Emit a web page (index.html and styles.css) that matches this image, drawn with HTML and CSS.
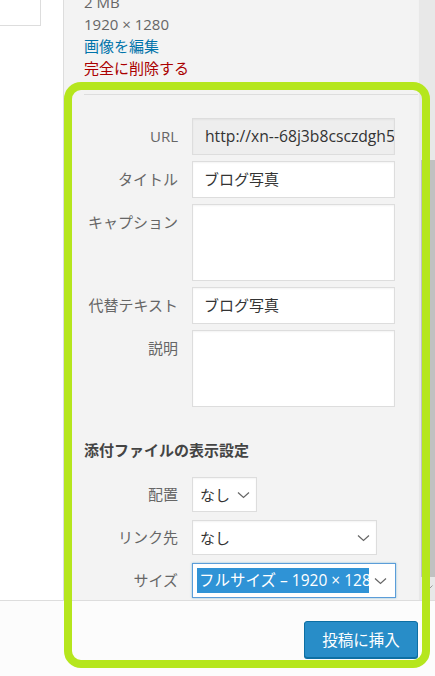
FILE: index.html
```html
<!DOCTYPE html>
<html lang="ja">

<head>
	<meta charset="UTF-8">
	<meta name="viewport" content="width=device-width, initial-scale=1.0">
	<title>添付ファイルの詳細</title>
	<link rel="stylesheet" href="styles.css">
</head>

<body>
	<div class="modal">
		<div class="main">
			<div class="library">
				<div class="thumb"></div>
			</div>

			<div class="sidebar">
				<div class="details">
					<div class="meta">2 MB</div>
					<div class="meta">1920 × 1280</div>
					<a class="meta link" href="#">画像を編集</a>
					<a class="meta delete" href="#">完全に削除する</a>
				</div>

				<div class="divider"></div>

				<div class="settings">
					<label class="label">URL</label>
					<div class="field readonly">http://xn--68j3b8csczdgh5.com/wp-content/uploads/blog.jpg</div>

					<label class="label">タイトル</label>
					<div class="field">ブログ写真</div>

					<label class="label">キャプション</label>
					<div class="field area"></div>

					<label class="label">代替テキスト</label>
					<div class="field">ブログ写真</div>

					<label class="label">説明</label>
					<div class="field area"></div>
				</div>

				<h2 class="heading">添付ファイルの表示設定</h2>

				<div class="settings display">
					<label class="label">配置</label>
					<div class="select select-sm">
						<span class="value">なし</span>
						<svg class="chevron" width="13" height="8" viewBox="0 0 13 8"><path d="M1 1.5 6.5 6.5 12 1.5" fill="none" stroke="#666" stroke-width="1.2"/></svg>
					</div>

					<label class="label">リンク先</label>
					<div class="select select-md">
						<span class="value">なし</span>
						<svg class="chevron" width="13" height="8" viewBox="0 0 13 8"><path d="M1 1.5 6.5 6.5 12 1.5" fill="none" stroke="#666" stroke-width="1.2"/></svg>
					</div>

					<label class="label">サイズ</label>
					<div class="select select-full focused">
						<span class="value selected">フルサイズ – 1920 × 1280</span>
						<svg class="chevron" width="13" height="8" viewBox="0 0 13 8"><path d="M1 1.5 6.5 6.5 12 1.5" fill="none" stroke="#666" stroke-width="1.2"/></svg>
					</div>
				</div>
			</div>

			<div class="scrollbar">
				<div class="thumb-bar"></div>
				<svg class="scroll-arrow" width="8" height="5" viewBox="0 0 8 5"><path d="M.5.5 4 4 7.5.5" fill="none" stroke="#999" stroke-width="1"/></svg>
			</div>
		</div>

		<div class="toolbar">
			<button class="button-primary">投稿に挿入</button>
		</div>

		<div class="highlight"></div>
	</div>
</body>

</html>
```

FILE: styles.css
```css
body {
	margin: 0;
	font-family: "Open Sans", "Noto Sans CJK JP", sans-serif;
	font-size: 15px;
	color: #444;
	background: #fff;
}

.modal {
	position: relative;
	width: 435px;
	height: 676px;
	display: grid;
	grid-template-rows: 600px 76px;
	overflow: hidden;
}

.main {
	display: grid;
	grid-template-columns: 63px 355px 17px;
	overflow: hidden;
}

.library {
	background: #fff;
}

.library .thumb {
	width: 40px;
	height: 25px;
	border-right: 1px solid #ddd;
	border-bottom: 1px solid #ddd;
	background: #fff;
}

.sidebar {
	background: #f3f3f3;
	border-left: 1px solid #ddd;
	padding-left: 20px;
	overflow: hidden;
}

/* scrolled down a little */
.details {
	margin-top: -9px;
}

.meta {
	display: block;
	line-height: 22px;
	color: #666;
	text-decoration: none;
	white-space: nowrap;
}

.meta.link {
	color: #0073aa;
}

.meta.delete {
	color: #a00;
}

.divider {
	margin-top: 15px;
	border-top: 1px solid #ddd;
}

.settings {
	display: grid;
	grid-template-columns: 94px 1fr;
	column-gap: 14px;
	row-gap: 6px;
	margin-top: 23px;
	margin-right: 23px;
}

.label {
	text-align: right;
	line-height: 37px;
	color: #666;
	white-space: nowrap;
}

.field {
	box-sizing: border-box;
	height: 37px;
	line-height: 35px;
	padding: 0 11px;
	border: 1px solid #ddd;
	background: #fff;
	color: #333;
	white-space: nowrap;
	overflow: hidden;
	box-shadow: inset 0 1px 2px rgba(0, 0, 0, 0.05);
}

.field.readonly {
	background: #eee;
	padding-left: 12px;
	font-size: 15.7px;
}

.field.area {
	height: 77px;
}

.heading {
	margin: 32px 0 0;
	font-size: 15px;
	line-height: 22px;
	font-weight: bold;
	color: #444;
}

.settings.display {
	margin-top: 16px;
	row-gap: 8px;
}

.display .label {
	line-height: 35px;
}

.select {
	box-sizing: border-box;
	height: 35px;
	display: flex;
	align-items: center;
	justify-content: space-between;
	padding: 0 6px 0 7px;
	border: 1px solid #ddd;
	background: #fff;
	color: #333;
	box-shadow: inset 0 1px 2px rgba(0, 0, 0, 0.05);
}

.select-sm {
	width: 65px;
}

.select-md {
	width: 185px;
}

.select-full {
	width: 204px;
}

.select.focused {
	border-color: #5b9dd9;
	padding: 0 8px 0 4px;
	box-shadow: 0 0 2px rgba(30, 140, 190, 0.5);
}

.select .value {
	white-space: nowrap;
	overflow: hidden;
}

.select .selected {
	flex: 1;
	height: 25px;
	line-height: 25px;
	padding-left: 2px;
	margin-right: 5px;
	background: #2f93d6;
	color: #fff;
	font-size: 15.5px;
}

.chevron {
	flex-shrink: 0;
}

.scrollbar {
	position: relative;
	background: #e8e8e8;
	border-left: 1px solid #f2f2f2;
}

.thumb-bar {
	margin-top: 160px;
	margin-left: 2px;
	height: 417px;
	background: #c1c1c1;
}

.scroll-arrow {
	display: block;
	margin: 8px 0 0 6px;
}

.toolbar {
	display: flex;
	justify-content: flex-end;
	align-items: flex-start;
	padding: 20px 17px 0 0;
	background: #fcfcfc;
	border-top: 1px solid #ddd;
}

.button-primary {
	width: 114px;
	height: 37px;
	padding: 0;
	border: 1px solid #0d6fa3;
	border-radius: 3px;
	background: #288dc8;
	color: #fff;
	font-family: "Open Sans", "Noto Sans CJK JP", sans-serif;
	font-size: 15.5px;
	box-shadow: 0 1px 0 #0d6fa3;
	cursor: pointer;
}

.highlight {
	position: absolute;
	left: 64px;
	top: 82px;
	width: 366px;
	height: 586px;
	box-sizing: border-box;
	border: 8px solid #b5e61d;
	border-radius: 17px;
	pointer-events: none;
}
```
